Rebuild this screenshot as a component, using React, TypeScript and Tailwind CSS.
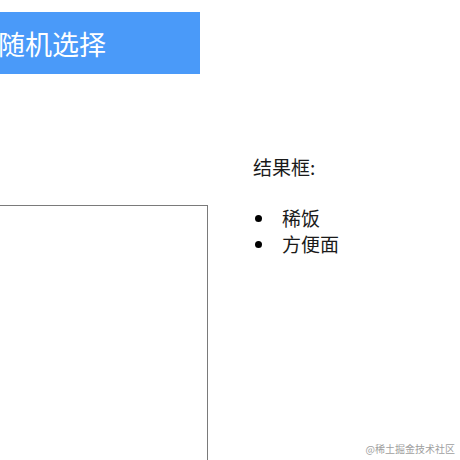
const items = ['稀饭', '方便面']

export default function App() {
  return (
    <div
      className="relative w-[460px] h-[460px] overflow-hidden bg-white flex"
      style={{ fontFamily: '"Noto Sans CJK SC", "Noto Sans", sans-serif' }}
    >
      <div className="w-[300px] -ml-[92px] shrink-0 flex flex-col pt-[12px]">
        <button className="shrink-0 w-[292px] h-[62px] bg-[#4a9af9] text-white text-[27px] text-left pl-[90px] leading-none">
          随机选择
        </button>
        <div className="shrink-0 mt-[131px] h-[300px] border border-[#7a7a7a]" />
      </div>

      <div className="ml-[45px] pt-[154px] text-[19px] text-[#1a1a1a]">
        <p className="leading-[26px]">结果框:</p>
        <ul className="mt-[25px]">
          {items.map((item) => (
            <li key={item} className="flex items-center leading-[26px]">
              <span className="w-[7px] h-[7px] rounded-full bg-black ml-[2px] mr-[20px]" />
              {item}
            </li>
          ))}
        </ul>
      </div>

      <div className="absolute right-[5px] bottom-[4px] text-[10px] text-[#a0a0a0]">
        @稀土掘金技术社区
      </div>
    </div>
  )
}
